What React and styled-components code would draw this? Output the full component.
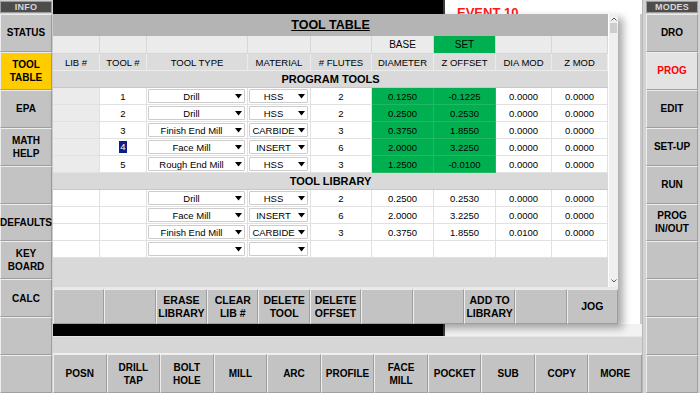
import React from "react";
import styled, { createGlobalStyle } from "styled-components";

const COLS = "47px 47px 101px 63px 61px 62px 62px 56px 56px";
const GREEN = "#00b050";

const leftKeys = [
  { label: "STATUS" },
  { label: "TOOL\nTABLE", tone: "yellow" },
  { label: "EPA" },
  { label: "MATH\nHELP" },
  { label: "" },
  { label: "DEFAULTS" },
  { label: "KEY\nBOARD" },
  { label: "CALC" },
  { label: "" },
  { label: "" },
];

const rightKeys = [
  { label: "DRO" },
  { label: "PROG", tone: "light" },
  { label: "EDIT" },
  { label: "SET-UP" },
  { label: "RUN" },
  { label: "PROG\nIN/OUT" },
  { label: "" },
  { label: "" },
  { label: "" },
  { label: "" },
];

const actionKeys = [
  "",
  "",
  "ERASE\nLIBRARY",
  "CLEAR\nLIB #",
  "DELETE\nTOOL",
  "DELETE\nOFFSET",
  "",
  "",
  "ADD TO\nLIBRARY",
  "",
  "JOG",
];

const functionKeys = [
  "POSN",
  "DRILL\nTAP",
  "BOLT\nHOLE",
  "MILL",
  "ARC",
  "PROFILE",
  "FACE\nMILL",
  "POCKET",
  "SUB",
  "COPY",
  "MORE",
];

const programTools = [
  { tool: "1", type: "Drill", mat: "HSS", flutes: "2", dia: "0.1250", z: "-0.1225", diaMod: "0.0000", zMod: "0.0000" },
  { tool: "2", type: "Drill", mat: "HSS", flutes: "2", dia: "0.2500", z: "0.2530", diaMod: "0.0000", zMod: "0.0000" },
  { tool: "3", type: "Finish End Mill", mat: "CARBIDE", flutes: "3", dia: "0.3750", z: "1.8550", diaMod: "0.0000", zMod: "0.0000" },
  { tool: "4", type: "Face Mill", mat: "INSERT", flutes: "6", dia: "2.0000", z: "3.2250", diaMod: "0.0000", zMod: "0.0000", selected: true },
  { tool: "5", type: "Rough End Mill", mat: "HSS", flutes: "3", dia: "1.2500", z: "-0.0100", diaMod: "0.0000", zMod: "0.0000" },
];

const libraryTools = [
  { type: "Drill", mat: "HSS", flutes: "2", dia: "0.2500", z: "0.2530", diaMod: "0.0000", zMod: "0.0000" },
  { type: "Face Mill", mat: "INSERT", flutes: "6", dia: "2.0000", z: "3.2250", diaMod: "0.0000", zMod: "0.0000" },
  { type: "Finish End Mill", mat: "CARBIDE", flutes: "3", dia: "0.3750", z: "1.8550", diaMod: "0.0100", zMod: "0.0000" },
  { type: "", mat: "", flutes: "", dia: "", z: "", diaMod: "", zMod: "" },
];

const GlobalStyle = createGlobalStyle`
  body {
    margin: 0;
    background: #ffffff;
    font-family: "Liberation Sans", Arial, sans-serif;
  }
`;

const Screen = styled.div`
  width: 700px;
  height: 393px;
  display: grid;
  grid-template-columns: 53px 589px 58px;
  overflow: hidden;
  background: #d4d4d4;
`;

const SideColumn = styled.div`
  display: flex;
  flex-direction: column;
  background: #d2d2d2;
  padding: ${(p) => (p.$right ? "0 2px 0 3px" : "0 1px 0 0")};
  border-left: ${(p) => (p.$right ? "1px solid #b8b8b8" : "none")};
`;

const PanelLabel = styled.div`
  height: 12px;
  margin: 1px 0 1px;
  background: #4d4d4d;
  border: 1px solid #9c9c9c;
  box-sizing: border-box;
  color: #d8d8d8;
  font-size: 9px;
  font-weight: 700;
  line-height: 10px;
  text-align: center;
  letter-spacing: 0.2px;
`;

const toneBg = { yellow: "#ffcc00", light: "#e3e3e3" };

const Key = styled.div`
  flex: 1;
  display: flex;
  align-items: center;
  justify-content: center;
  box-sizing: border-box;
  background: ${(p) => toneBg[p.$tone] || "#c3c3c3"};
  border-top: 1px solid #ededed;
  border-left: 1px solid #ededed;
  border-right: 1px solid #9e9e9e;
  border-bottom: 1px solid #9e9e9e;
  color: ${(p) => (p.$tone === "light" ? "#ff0000" : "#000000")};
  font-size: ${(p) => p.$size || 10}px;
  font-weight: 700;
  line-height: 13px;
  text-align: center;
  white-space: pre-line;
`;

const Main = styled.div`
  display: flex;
  flex-direction: column;
  min-width: 0;
`;

const StatusStrip = styled.div`
  height: ${(p) => p.$h}px;
  flex-shrink: 0;
  display: flex;
  background: ${(p) => p.$fill};
`;

const ProgressBar = styled.div`
  width: 390px;
  background: #000000;
  border-right: 2px solid #3c3c3c;
`;

const EventText = styled.div`
  padding: 6px 0 0 12px;
  height: 14px;
  color: #ff1a1a;
  font-size: 13px;
  font-weight: 700;
  line-height: 13px;
  white-space: nowrap;
`;

const Workspace = styled.div`
  flex: 1;
  display: flex;
  background: #ffffff;
  border-right: 2px solid #c9c9c9;
  position: relative;
  z-index: 1;
`;

const Window = styled.div`
  width: 565px;
  display: flex;
  flex-direction: column;
  background: #d9d9d9;
  box-shadow: 5px 4px 8px rgba(0, 0, 0, 0.35);
`;

const ScrollArea = styled.div`
  flex: 1;
  display: flex;
  min-height: 0;
`;

const TablePane = styled.div`
  flex: 1;
  display: flex;
  flex-direction: column;
`;

const TitleBar = styled.div`
  height: 22px;
  display: flex;
  align-items: center;
  justify-content: center;
  background: #b4b4b4;
  font-size: 12.5px;
  font-weight: 700;
  text-decoration: underline;
`;

const Row = styled.div`
  display: grid;
  grid-template-columns: ${COLS};
  height: ${(p) => p.$h || 17}px;
`;

const Cell = styled.div`
  box-sizing: border-box;
  display: flex;
  align-items: center;
  justify-content: center;
  background: ${(p) => p.$bg || "#ffffff"};
  border-right: 1px solid ${(p) => p.$line || "#e1e1e1"};
  border-bottom: 1px solid ${(p) => p.$line || "#e1e1e1"};
  padding: ${(p) => (p.$pick ? "1px 2px 1px 1px" : "0")};
  font-size: ${(p) => p.$size || 9.5}px;
  color: #000000;
`;

const Band = styled.div`
  height: 17px;
  display: flex;
  align-items: center;
  justify-content: center;
  background: #d9d9d9;
  border-bottom: 1px solid #c8c8c8;
  box-sizing: border-box;
  font-size: 11px;
  font-weight: 700;
`;

const Picker = styled.div`
  flex: 1;
  height: 100%;
  display: flex;
  align-items: center;
  box-sizing: border-box;
  background: #ffffff;
  border: 1px solid #cccccc;
  border-radius: 1px;
`;

const PickerText = styled.span`
  flex: 1;
  text-align: center;
  font-size: 9.5px;
  white-space: nowrap;
`;

const Selected = styled.span`
  background: #0c1f86;
  color: #ffffff;
  padding: 0 1px;
  line-height: 12px;
`;

const Scrollbar = styled.div`
  width: 10px;
  display: flex;
  flex-direction: column;
  align-items: center;
  background: #efefef;
  border-left: 1px solid #ffffff;
`;

const ScrollArrow = styled.div`
  height: 9px;
  width: 100%;
  display: flex;
  align-items: center;
  justify-content: center;
  margin-top: ${(p) => (p.$down ? "auto" : "0")};
  margin-bottom: ${(p) => (p.$down ? "2px" : "0")};
`;

const Thumb = styled.div`
  width: 7px;
  height: 10px;
  background: #cdcdcd;
`;

const ActionBar = styled.div`
  height: 37px;
  display: flex;
  border-top: 2px solid #e8e8e8;
  box-sizing: border-box;
`;

const GrayBand = styled.div`
  height: 17px;
  background: #d6d6d6;
  border-top: 1px solid #e6e6e6;
  box-sizing: border-box;
`;

const FunctionBar = styled.div`
  height: 40px;
  display: flex;
  border-top: 1px solid #f0f0f0;
  box-sizing: border-box;
`;

const Arrow = () => (
  <svg width="10" height="5" viewBox="0 0 10 5">
    <path d="M1 0 H8 L4.5 4.5 Z" fill="#000" />
  </svg>
);

const Dropdown = ({ value }) => (
  <Picker>
    <PickerText>{value}</PickerText>
    <Arrow />
  </Picker>
);

const ToolRow = ({ item, program }) => (
  <Row>
    <Cell $bg={program ? "#ebebeb" : "#ffffff"} />
    <Cell>{item.selected ? <Selected>{item.tool}</Selected> : item.tool}</Cell>
    <Cell $pick>
      <Dropdown value={item.type} />
    </Cell>
    <Cell $pick>
      <Dropdown value={item.mat} />
    </Cell>
    <Cell>{item.flutes}</Cell>
    <Cell $bg={program ? GREEN : undefined} $line={program ? "#22b862" : undefined}>
      {item.dia}
    </Cell>
    <Cell $bg={program ? GREEN : undefined} $line={program ? "#22b862" : undefined}>
      {item.z}
    </Cell>
    <Cell>{item.diaMod}</Cell>
    <Cell>{item.zMod}</Cell>
  </Row>
);

const headers = ["LIB #", "TOOL #", "TOOL TYPE", "MATERIAL", "# FLUTES", "DIAMETER", "Z OFFSET", "DIA MOD", "Z MOD"];

const ToolTable = () => (
  <TablePane>
    <TitleBar>TOOL TABLE</TitleBar>
    <Row $h={18}>
      {headers.map((h, i) => (
        <Cell key={h} $bg={i === 6 ? GREEN : "#ebebeb"} $line="#d7d7d7" $size={10}>
          {i === 5 ? "BASE" : i === 6 ? "SET" : ""}
        </Cell>
      ))}
    </Row>
    <Row>
      {headers.map((h) => (
        <Cell key={h} $bg="#dcdcdc" $line="#ececec">
          {h}
        </Cell>
      ))}
    </Row>
    <Band>PROGRAM TOOLS</Band>
    {programTools.map((item) => (
      <ToolRow key={item.tool} item={item} program />
    ))}
    <Band>TOOL LIBRARY</Band>
    {libraryTools.map((item, i) => (
      <ToolRow key={i} item={{ ...item, tool: "" }} />
    ))}
  </TablePane>
);

const App = () => {
  return (
    <>
      <GlobalStyle />
      <Screen>
        <SideColumn>
          <PanelLabel>INFO</PanelLabel>
          {leftKeys.map((k, i) => (
            <Key key={i} $tone={k.tone}>
              {k.label}
            </Key>
          ))}
        </SideColumn>

        <Main>
          <StatusStrip $h={14} $fill="#ffffff">
            <ProgressBar />
            <EventText>EVENT 10</EventText>
          </StatusStrip>

          <Workspace>
            <Window>
              <ScrollArea>
                <ToolTable />
                <Scrollbar>
                  <ScrollArrow>
                    <svg width="6" height="4" viewBox="0 0 6 4">
                      <path d="M0.5 3.5 L3 1 L5.5 3.5" stroke="#555" fill="none" />
                    </svg>
                  </ScrollArrow>
                  <Thumb />
                  <ScrollArrow $down>
                    <svg width="6" height="4" viewBox="0 0 6 4">
                      <path d="M0.5 0.5 L3 3 L5.5 0.5" stroke="#555" fill="none" />
                    </svg>
                  </ScrollArrow>
                </Scrollbar>
              </ScrollArea>
              <ActionBar>
                {actionKeys.map((k, i) => (
                  <Key key={i} $size={10.5}>
                    {k}
                  </Key>
                ))}
              </ActionBar>
            </Window>
          </Workspace>

          <StatusStrip $h={12} $fill="#f2f2f2">
            <ProgressBar />
          </StatusStrip>
          <GrayBand />
          <FunctionBar>
            {functionKeys.map((k) => (
              <Key key={k}>{k}</Key>
            ))}
          </FunctionBar>
        </Main>

        <SideColumn $right>
          <PanelLabel>MODES</PanelLabel>
          {rightKeys.map((k, i) => (
            <Key key={i} $tone={k.tone}>
              {k.label}
            </Key>
          ))}
        </SideColumn>
      </Screen>
    </>
  );
};

export default App;
